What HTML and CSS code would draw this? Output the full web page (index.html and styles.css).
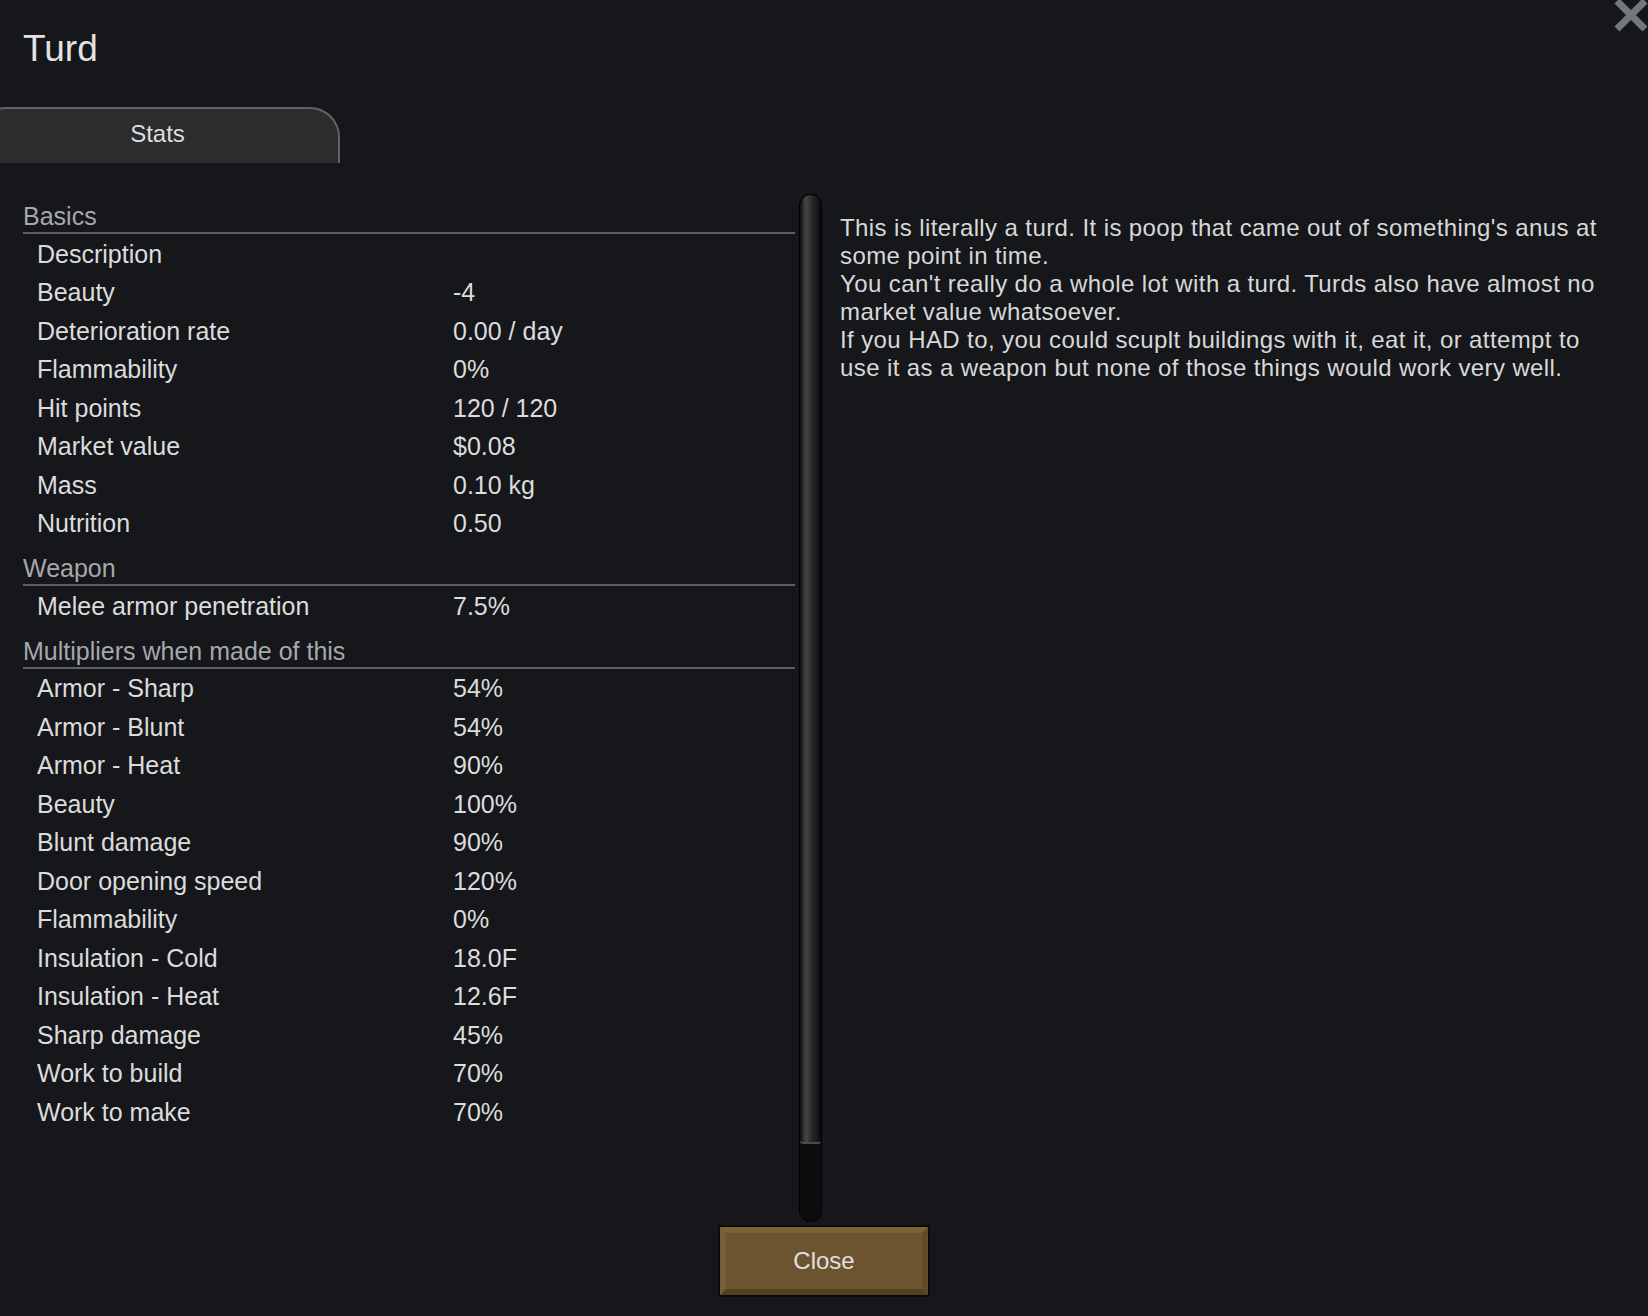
FILE: index.html
```html
<!DOCTYPE html>
<html lang="en">
<head>
    <meta charset="UTF-8">
    <title>Turd</title>
    <link rel="stylesheet" href="styles.css">
</head>
<body>

    <div class="window">
        <!-- close cross, sits over the corner -->
        <svg class="close-x" width="34" height="34" viewBox="0 0 34 34">
            <path d="M3 1 L31 29 M31 1 L3 29" stroke="#74777b" stroke-width="7" fill="none"/>
        </svg>

        <h1 class="title">Turd</h1>

        <div class="tabs">
            <div class="tab">Stats</div>
        </div>

        <div class="content">
            <div class="stats">
                <div class="section">Basics</div>
                <div class="row"><span class="label">Description</span><span class="value"></span></div>
                <div class="row"><span class="label">Beauty</span><span class="value">-4</span></div>
                <div class="row"><span class="label">Deterioration rate</span><span class="value">0.00 / day</span></div>
                <div class="row"><span class="label">Flammability</span><span class="value">0%</span></div>
                <div class="row"><span class="label">Hit points</span><span class="value">120 / 120</span></div>
                <div class="row"><span class="label">Market value</span><span class="value">$0.08</span></div>
                <div class="row"><span class="label">Mass</span><span class="value">0.10 kg</span></div>
                <div class="row"><span class="label">Nutrition</span><span class="value">0.50</span></div>

                <div class="section">Weapon</div>
                <div class="row"><span class="label">Melee armor penetration</span><span class="value">7.5%</span></div>

                <div class="section">Multipliers when made of this</div>
                <div class="row"><span class="label">Armor - Sharp</span><span class="value">54%</span></div>
                <div class="row"><span class="label">Armor - Blunt</span><span class="value">54%</span></div>
                <div class="row"><span class="label">Armor - Heat</span><span class="value">90%</span></div>
                <div class="row"><span class="label">Beauty</span><span class="value">100%</span></div>
                <div class="row"><span class="label">Blunt damage</span><span class="value">90%</span></div>
                <div class="row"><span class="label">Door opening speed</span><span class="value">120%</span></div>
                <div class="row"><span class="label">Flammability</span><span class="value">0%</span></div>
                <div class="row"><span class="label">Insulation - Cold</span><span class="value">18.0F</span></div>
                <div class="row"><span class="label">Insulation - Heat</span><span class="value">12.6F</span></div>
                <div class="row"><span class="label">Sharp damage</span><span class="value">45%</span></div>
                <div class="row"><span class="label">Work to build</span><span class="value">70%</span></div>
                <div class="row"><span class="label">Work to make</span><span class="value">70%</span></div>
            </div>

            <div class="scrollbar">
                <div class="thumb"></div>
            </div>

            <div class="description">
                <p>This is literally a turd. It is poop that came out of something's anus at some point in time.</p>
                <p>You can't really do a whole lot with a turd. Turds also have almost no market value whatsoever.</p>
                <p>If you HAD to, you could scuplt buildings with it, eat it, or attempt to use it as a weapon but none of those things would work very well.</p>
            </div>
        </div>

        <div class="footer">
            <button class="close-button">Close</button>
        </div>
    </div>

</body>
</html>
```

FILE: styles.css
```css
/* Basic Reset */
* {
    margin: 0;
    padding: 0;
    box-sizing: border-box;
}
body {
    font-family: "Liberation Sans", Arial, sans-serif;
    background-color: #15171b;
    color: #dcdcdc;
    overflow: hidden;
}

.window {
    position: relative;
    width: 1648px;
    height: 1316px;
    overflow: hidden;
}

.close-x {
    position: absolute;
    top: 0;
    right: 0;
}

/* Title */
.title {
    font-size: 37px;
    font-weight: normal;
    line-height: 42px;
    color: #e2e2e2;
    padding: 28px 0 0 23px;
}

/* Tabs */
.tabs {
    display: flex;
    margin-top: 37px;
}
.tab {
    width: 365px;
    height: 56px;
    margin-left: -25px;
    background-color: #2b2c2e;
    border: 2px solid #626262;
    border-bottom: none;
    border-radius: 30px 30px 0 0;
    font-size: 24px;
    line-height: 50px;
    text-align: center;
    color: #dedede;
}

/* Stats + description */
.content {
    display: flex;
    height: 1032px;
    margin-top: 27px;
    padding-left: 23px;
}

.stats {
    width: 772px;
}
.section {
    display: flex;
    align-items: flex-end;
    height: 44px;
    padding-bottom: 2px;
    border-bottom: 2px solid #5f6062;
    font-size: 25px;
    line-height: 28px;
    color: #a7a8aa;
}
.row {
    display: flex;
    height: 38.5px;
    align-items: center;
    padding: 2px 0 0 14px;
    font-size: 25px;
}
.row .label {
    width: 416px;
}

.scrollbar {
    width: 23px;
    margin: 4px 0 0 4px;
    background-color: #0b0c0e;
    border: 1px solid #000;
    border-radius: 11px;
    overflow: hidden;
}
.thumb {
    height: 949px;
    border-radius: 10px 10px 3px 3px;
    background: linear-gradient(to right, #0d0d0d 0%, #3c3c3c 22%, #444 32%, #2b2b2b 55%, #1a1a1a 80%, #080808 100%);
    border-bottom: 2px solid #4a4a4a;
}

.description {
    width: 772px;
    margin-left: 18px;
    padding-top: 24px;
    font-size: 24px;
    letter-spacing: 0.4px;
    line-height: 28px;
    color: #d8d8d8;
}

/* Close button */
.footer {
    display: flex;
    justify-content: center;
    margin-top: 5px;
}
.close-button {
    width: 208px;
    height: 68px;
    background-color: #6c5430;
    border: 6px solid;
    border-color: #7b6237 #5f4a29 #55411f #765e35;
    box-shadow: 0 0 0 2px #0b0b0b;
    font-family: "Liberation Sans", Arial, sans-serif;
    font-size: 24px;
    color: #e0e0e0;
    cursor: pointer;
}
.close-button:hover {
    background-color: #7a6038;
}
```
